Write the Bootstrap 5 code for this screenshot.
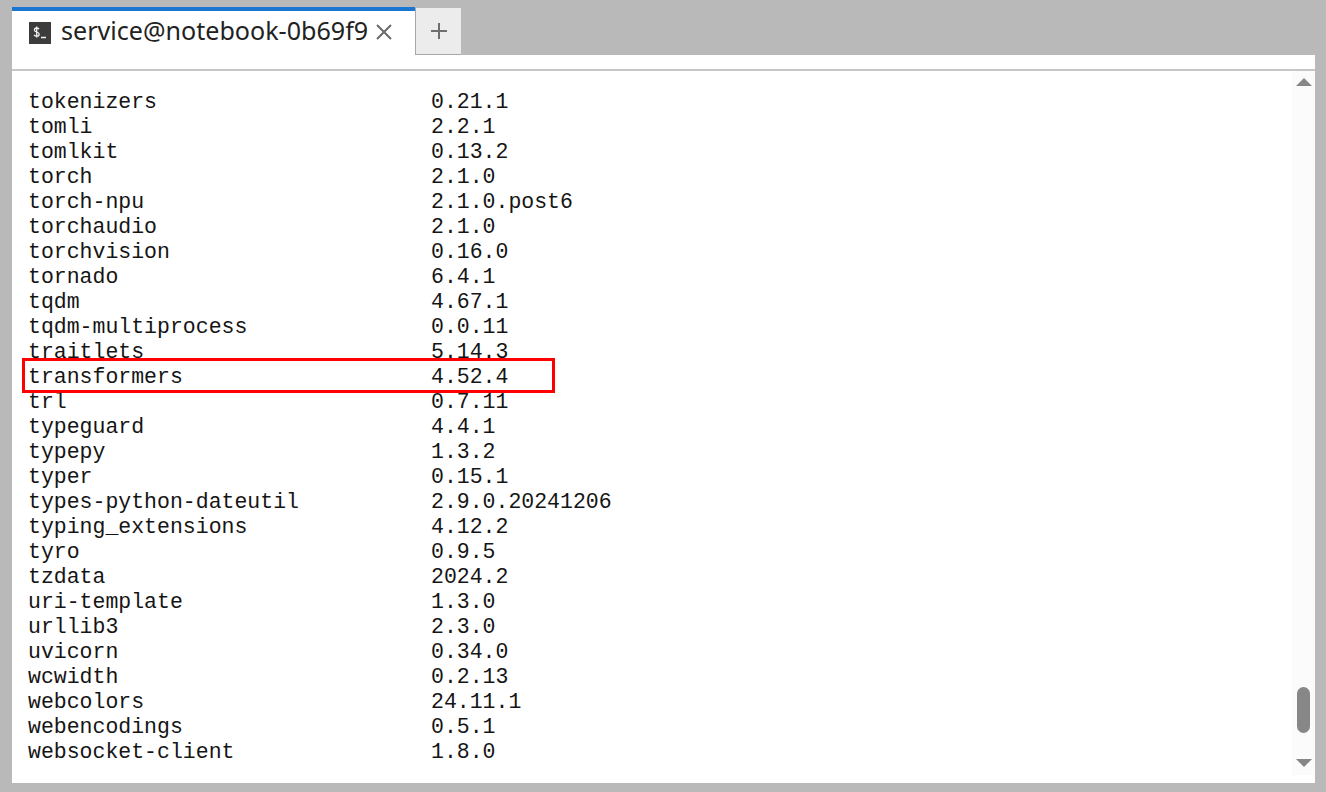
<!DOCTYPE html>
<html lang="en"><head><meta charset="utf-8"><title>Terminal</title>
<link rel="stylesheet" href="https://cdn.jsdelivr.net/npm/bootstrap@5.3.0/dist/css/bootstrap.min.css">
<style>
html,body{height:792px;overflow:hidden}
body{background:#b9b9b9;padding:7px 11px 9px 12px;font-family:"Liberation Sans",sans-serif}
.shell{height:776px}
.tabstrip{height:48px}
.tab-on{width:403px;background:#fff;border-top:4px solid #1976d2;padding-left:17px;gap:10px}
.prompt-ico{width:22px;height:22px;flex:none;margin-top:-1px}
.tab-title{font-family:"Noto Sans",sans-serif;font-size:25.1px;color:#222;line-height:1;white-space:nowrap;margin-top:-5px;width:309px}
.tab-x{width:18px;height:18px;flex:none;margin-left:-5px;margin-top:-3px}
.tab-new{width:46px;height:47px;margin-top:1px;background:#ececec;border-left:1px solid #a8a8a8;border-bottom:1px solid #a8a8a8}
.term{height:728px;background:#fff}
.term-top{height:16px;border-bottom:2px solid #c6c6c6}
.term-body{height:712px}
.term-lines{padding:19px 0 0 16px;font-family:"Liberation Mono",monospace;font-size:21.5px;line-height:25px;color:#151515}
.pkg-row{height:25px;white-space:pre}
.pkg-name{width:403px}
.pkg-ver{width:200px}
.hl-box{position:absolute;left:10px;top:287px;width:533px;height:35px;border:3px solid #f00;pointer-events:none}
.sbar{width:23px;margin-bottom:8px;background:#fbfbfb}
.sbar-up{top:7px;left:4px;border-left:8px solid transparent;border-right:8px solid transparent;border-bottom:8px solid #868686}
.sbar-down{bottom:8px;left:4px;border-left:8px solid transparent;border-right:8px solid transparent;border-top:8px solid #868686}
.sbar-thumb{top:616px;left:5px;width:13px;height:46px;border-radius:7px;background:#878787}
</style></head><body>
<div class="shell d-flex flex-column">
 <div class="tabstrip d-flex align-items-start">
  <div class="tab-on h-100 d-flex align-items-center">
   <svg class="prompt-ico" viewBox="0 0 22 22"><rect width="22" height="22" fill="#3c3c3c"/><path d="M10 7.2C9.4 6.4 8.5 6 7.600 6 6.300 6 5.400 6.800 5.400 7.900c0 2.600 4.800 1.600 4.800 4.300 0 1.100-1 1.900-2.500 1.900-1 0-2-.4-2.600-1.300M7.700 4.500v11" fill="none" stroke="#f2f2f2" stroke-width="1.300"/><path d="M12 15.500h5" stroke="#f2f2f2" stroke-width="1.500"/></svg>
   <span class="tab-title">service@notebook-0b69f9</span>
   <svg class="tab-x" viewBox="0 0 18 18"><path d="M2 2l14 14M16 2L2 16" stroke="#6b6b6b" stroke-width="2"/></svg>
  </div>
  <div class="tab-new d-flex align-items-center justify-content-center">
   <svg width="18" height="18" viewBox="0 0 18 18"><path d="M9 1v16M1 9h16" stroke="#6e6e6e" stroke-width="2"/></svg>
  </div>
 </div>
 <div class="term d-flex flex-column">
  <div class="term-top"></div>
  <div class="term-body d-flex position-relative">
   <div class="term-lines flex-grow-1">
    <div class="pkg-row d-flex"><span class="pkg-name">tokenizers</span><span class="pkg-ver">0.21.1</span></div>
    <div class="pkg-row d-flex"><span class="pkg-name">tomli</span><span class="pkg-ver">2.2.1</span></div>
    <div class="pkg-row d-flex"><span class="pkg-name">tomlkit</span><span class="pkg-ver">0.13.2</span></div>
    <div class="pkg-row d-flex"><span class="pkg-name">torch</span><span class="pkg-ver">2.1.0</span></div>
    <div class="pkg-row d-flex"><span class="pkg-name">torch-npu</span><span class="pkg-ver">2.1.0.post6</span></div>
    <div class="pkg-row d-flex"><span class="pkg-name">torchaudio</span><span class="pkg-ver">2.1.0</span></div>
    <div class="pkg-row d-flex"><span class="pkg-name">torchvision</span><span class="pkg-ver">0.16.0</span></div>
    <div class="pkg-row d-flex"><span class="pkg-name">tornado</span><span class="pkg-ver">6.4.1</span></div>
    <div class="pkg-row d-flex"><span class="pkg-name">tqdm</span><span class="pkg-ver">4.67.1</span></div>
    <div class="pkg-row d-flex"><span class="pkg-name">tqdm-multiprocess</span><span class="pkg-ver">0.0.11</span></div>
    <div class="pkg-row d-flex"><span class="pkg-name">traitlets</span><span class="pkg-ver">5.14.3</span></div>
    <div class="pkg-row d-flex"><span class="pkg-name">transformers</span><span class="pkg-ver">4.52.4</span></div>
    <div class="pkg-row d-flex"><span class="pkg-name">trl</span><span class="pkg-ver">0.7.11</span></div>
    <div class="pkg-row d-flex"><span class="pkg-name">typeguard</span><span class="pkg-ver">4.4.1</span></div>
    <div class="pkg-row d-flex"><span class="pkg-name">typepy</span><span class="pkg-ver">1.3.2</span></div>
    <div class="pkg-row d-flex"><span class="pkg-name">typer</span><span class="pkg-ver">0.15.1</span></div>
    <div class="pkg-row d-flex"><span class="pkg-name">types-python-dateutil</span><span class="pkg-ver">2.9.0.20241206</span></div>
    <div class="pkg-row d-flex"><span class="pkg-name">typing_extensions</span><span class="pkg-ver">4.12.2</span></div>
    <div class="pkg-row d-flex"><span class="pkg-name">tyro</span><span class="pkg-ver">0.9.5</span></div>
    <div class="pkg-row d-flex"><span class="pkg-name">tzdata</span><span class="pkg-ver">2024.2</span></div>
    <div class="pkg-row d-flex"><span class="pkg-name">uri-template</span><span class="pkg-ver">1.3.0</span></div>
    <div class="pkg-row d-flex"><span class="pkg-name">urllib3</span><span class="pkg-ver">2.3.0</span></div>
    <div class="pkg-row d-flex"><span class="pkg-name">uvicorn</span><span class="pkg-ver">0.34.0</span></div>
    <div class="pkg-row d-flex"><span class="pkg-name">wcwidth</span><span class="pkg-ver">0.2.13</span></div>
    <div class="pkg-row d-flex"><span class="pkg-name">webcolors</span><span class="pkg-ver">24.11.1</span></div>
    <div class="pkg-row d-flex"><span class="pkg-name">webencodings</span><span class="pkg-ver">0.5.1</span></div>
    <div class="pkg-row d-flex"><span class="pkg-name">websocket-client</span><span class="pkg-ver">1.8.0</span></div>
   </div>
   <div class="sbar position-relative">
    <div class="sbar-up position-absolute"></div>
    <div class="sbar-thumb position-absolute"></div>
    <div class="sbar-down position-absolute"></div>
   </div>
   <div class="hl-box"></div>
  </div>
 </div>
</div>
</body></html>
